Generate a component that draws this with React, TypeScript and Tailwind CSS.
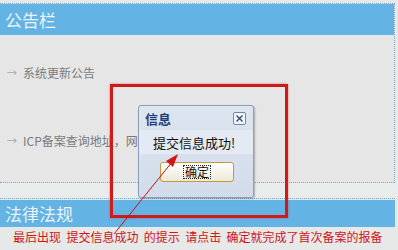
import React from "react";

const font = { fontFamily: '"Noto Sans CJK SC", "Noto Sans", sans-serif' };

export default function App() {
  return (
    <div className="relative w-[398px] h-[250px] overflow-hidden bg-[#e7e9e9]" style={font}>
      <div className="pt-[3px]">
        <div className="w-[395px] border-t border-r border-dotted border-[#7fa6c6]">
          <div className="h-[31px] bg-[#63b3e4] flex items-center pl-[5px] text-[17px] text-[#eaf3fb] leading-none">
            公告栏
          </div>
          <div className="h-[148px] bg-[#e6e6e6] border-b border-dotted border-[#7fa6c6] flex flex-col pt-[30px] gap-[52px] text-[12px] text-[#7b7b7b] leading-none">
            <div className="flex items-center h-[16px] whitespace-nowrap">
              <span className="w-[23px] pl-[7px] text-[10px] text-[#a9a9a9]">→</span>
              <span>系统更新公告</span>
            </div>
            <div className="flex items-center h-[16px] whitespace-nowrap">
              <span className="w-[23px] pl-[7px] text-[10px] text-[#a9a9a9]">→</span>
              <span>ICP备案查询地址，网</span>
            </div>
          </div>
        </div>
        <div className="h-[15px] bg-[#e8eced]" />
        <div className="w-[395px] border-t border-dotted border-[#7fa6c6] pt-[1px]">
          <div className="h-[27px] bg-[#63b3e4] flex items-center pl-[5px] text-[17px] text-[#eaf3fb] leading-none">
            法律法规
          </div>
        </div>
        <div className="pl-[13px] pt-[4px] text-[12px] leading-none text-[#d41414] whitespace-nowrap">
          最后出现&nbsp;&nbsp;提交信息成功&nbsp;&nbsp;的提示&nbsp;&nbsp;请点击&nbsp;&nbsp;确定就完成了首次备案的报备
        </div>
      </div>

      {/* dialog */}
      <div className="absolute left-[138px] top-[105px] w-[116px] h-[93px] rounded-[3px] border border-[#8a9dbb] bg-gradient-to-b from-[#dde5f0] to-[#d3dcea] shadow-[1px_1px_2px_rgba(0,0,0,0.25)] flex flex-col">
        <div className="h-[24px] flex items-center justify-between pl-[6px] pr-[7px]">
          <span className="text-[13px] font-bold text-[#1e3e7c] leading-none">信息</span>
          <span className="w-[13px] h-[13px] border border-[#6a86b4] bg-[#f3f6fb] rounded-[2px] flex items-center justify-center">
            <svg width="9" height="9" viewBox="0 0 9 9">
              <path d="M1.5 1.5 L7.5 7.5 M7.5 1.5 L1.5 7.5" stroke="#2a4a80" strokeWidth="1.4" />
            </svg>
          </span>
        </div>
        <div className="h-[24px] bg-[#e4eaf3] flex items-center pl-[14px] text-[13px] text-[#111] leading-none">
          提交信息成功!
        </div>
        <div className="flex justify-center pt-[8px] pl-[2px]">
          <div className="w-[74px] h-[20px] rounded-[3px] border border-[#c69a3c] bg-gradient-to-b from-[#ffffff] to-[#eee8d8] flex items-center justify-center">
            <span className="text-[12px] leading-none text-[#111] border border-dotted border-[#222] px-[1px]">确定</span>
          </div>
        </div>
      </div>

      {/* red frame */}
      <div className="absolute left-[110px] top-[84px] w-[178px] h-[134px] border-[3px] border-[#cf1a1a] shadow-[0_0_2px_rgba(220,40,40,0.6)] pointer-events-none" />

      {/* arrow */}
      <svg className="absolute left-0 top-0" width="398" height="250" viewBox="0 0 398 250">
        <line x1="114" y1="234" x2="172" y2="162" stroke="#c81010" strokeWidth="1" />
        <polygon points="178,154 166,161 173,167" fill="#d41414" />
      </svg>
    </div>
  );
}
